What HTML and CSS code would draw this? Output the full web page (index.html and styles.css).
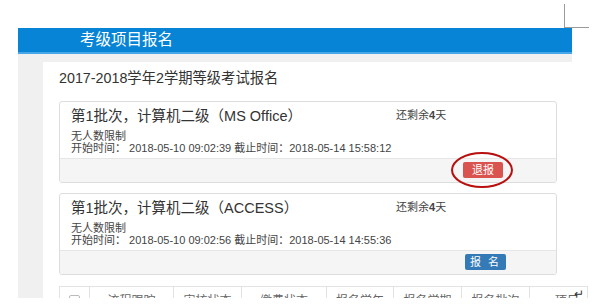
FILE: index.html
```html
<!DOCTYPE html>
<html lang="zh-CN">

<head>
    <meta charset="UTF-8">
    <title>考级项目报名</title>
    <link rel="stylesheet" href="styles.css">
</head>

<body>
    <div class="shot">
        <div class="corner-mark"></div>
        <div class="frame">
            <div class="topbar">考级项目报名</div>
            <div class="content">
                <div class="panel">
                    <h2 class="panel-title">2017-2018学年2学期等级考试报名</h2>

                    <div class="card">
                        <div class="card-body">
                            <div class="card-head">
                                <span class="card-title">第1批次，计算机二级（MS Office）</span>
                                <span class="remain">还剩余<b>4</b>天</span>
                            </div>
                            <p class="info">无人数限制</p>
                            <p class="info">开始时间： 2018-05-10 09:02:39 截止时间：2018-05-14 15:58:12</p>
                        </div>
                        <div class="card-foot">
                            <button class="btn btn-red">退报</button>
                        </div>
                        <div class="mark-circle"></div>
                    </div>

                    <div class="card">
                        <div class="card-body">
                            <div class="card-head">
                                <span class="card-title">第1批次，计算机二级（ACCESS）</span>
                                <span class="remain">还剩余<b>4</b>天</span>
                            </div>
                            <p class="info">无人数限制</p>
                            <p class="info">开始时间： 2018-05-10 09:02:56 截止时间：2018-05-14 14:55:36</p>
                        </div>
                        <div class="card-foot">
                            <button class="btn btn-blue">报 名</button>
                        </div>
                    </div>

                    <div class="table-wrap">
                        <table class="grid">
                            <tr>
                                <th class="col-check"><span class="checkbox"></span></th>
                                <th class="col-a">流程跟踪</th>
                                <th class="col-b">审核状态</th>
                                <th class="col-c">缴费状态</th>
                                <th class="col-d">报名学年</th>
                                <th class="col-e">报名学期</th>
                                <th class="col-f">报名批次</th>
                                <th class="col-g">项目</th>
                            </tr>
                        </table>
                        <span class="para-mark">↵</span>
                    </div>
                </div>
            </div>
        </div>
    </div>
</body>

</html>
```

FILE: styles.css
```css
/* General Reset */
body {
    margin: 0;
    font-family: "Liberation Sans", "Noto Sans CJK SC", sans-serif;
    background-color: #ffffff;
    color: #333;
}

.shot {
    position: relative;
    height: 298px;
    overflow: hidden;
    padding-top: 28px;
    box-sizing: border-box;
}

/* word page corner */
.corner-mark {
    position: absolute;
    left: 564px;
    top: 4px;
    width: 24px;
    height: 23px;
    border-left: 1px solid #9a9a9a;
    border-bottom: 1px solid #9a9a9a;
}

.frame {
    margin-left: 18px;
    width: 554px;
    background-color: #f0f0f0;
    height: 300px;
}

/* Header */
.topbar {
    height: 24px;
    line-height: 24px;
    background-color: #0784d6;
    border-bottom: 2px solid #45a6e8;
    color: #ffffff;
    font-size: 15.5px;
    padding-left: 62px;
}

.content {
    padding: 8px 0 0 25px;
}

.panel {
    background-color: #ffffff;
    padding: 6px 15px 0 16px;
    height: 260px;
}

.panel-title {
    margin: 0 0 13px;
    font-size: 14.3px;
    font-weight: normal;
    line-height: 20px;
    color: #333;
}

/* Cards */
.card {
    position: relative;
    border: 1px solid #dddddd;
    border-radius: 3px;
    margin-bottom: 10px;
    background-color: #ffffff;
}

.card-body {
    padding: 2px 12px 4px 11px;
}

.card-head {
    display: flex;
    align-items: center;
    height: 20px;
    margin-bottom: 6px;
}

.card-title {
    width: 325px;
    font-size: 14.5px;
    color: #333;
}

.remain {
    font-size: 11px;
    color: #444;
}

.remain b {
    font-weight: bold;
}

.info {
    margin: 0;
    font-size: 11px;
    line-height: 12px;
    color: #444;
}

.card-foot {
    display: flex;
    justify-content: flex-end;
    height: 24px;
    padding: 3px 53px 0 0;
    box-sizing: border-box;
    background-color: #f5f5f5;
    border-top: 1px solid #e6e6e6;
    border-radius: 0 0 3px 3px;
}

.btn {
    height: 16px;
    width: 40px;
    padding: 0;
    border: none;
    border-radius: 2px;
    color: #ffffff;
    font-family: inherit;
    font-size: 11px;
    line-height: 16px;
    cursor: pointer;
}

.btn-red {
    background-color: #d9534f;
}

.btn-blue {
    width: 41px;
    margin-right: -3px;
    background-color: #337ab7;
    letter-spacing: 2px;
}

.mark-circle {
    position: absolute;
    left: 391px;
    top: 50px;
    width: 58px;
    height: 32px;
    border: 2.5px solid #b80f0f;
    border-radius: 50%;
}

/* Table */
.table-wrap {
    position: relative;
    margin-top: 11px;
    margin-right: -15px;
}

.grid {
    width: 512px;
    border-collapse: collapse;
    table-layout: fixed;
}

.grid th {
    border: 1px solid #e3e3e3;
    height: 30px;
    padding: 4px 0 0;
    vertical-align: top;
    font-size: 12px;
    font-weight: normal;
    color: #666;
    text-align: center;
}

.col-check { width: 29px; }
.col-a { width: 83px; }
.col-b { width: 67px; }
.col-c { width: 84px; }
.col-d { width: 66px; }
.col-e { width: 67px; }
.col-f { width: 67px; }
.col-g { width: 49px; text-align: right !important; padding-right: 8px !important; }

.checkbox {
    display: inline-block;
    width: 9px;
    height: 9px;
    margin-top: 4px;
    border: 1px solid #bbb;
    border-radius: 2px;
}

.para-mark {
    position: absolute;
    left: 515px;
    top: 1px;
    font-size: 12px;
    color: #333;
}
```
